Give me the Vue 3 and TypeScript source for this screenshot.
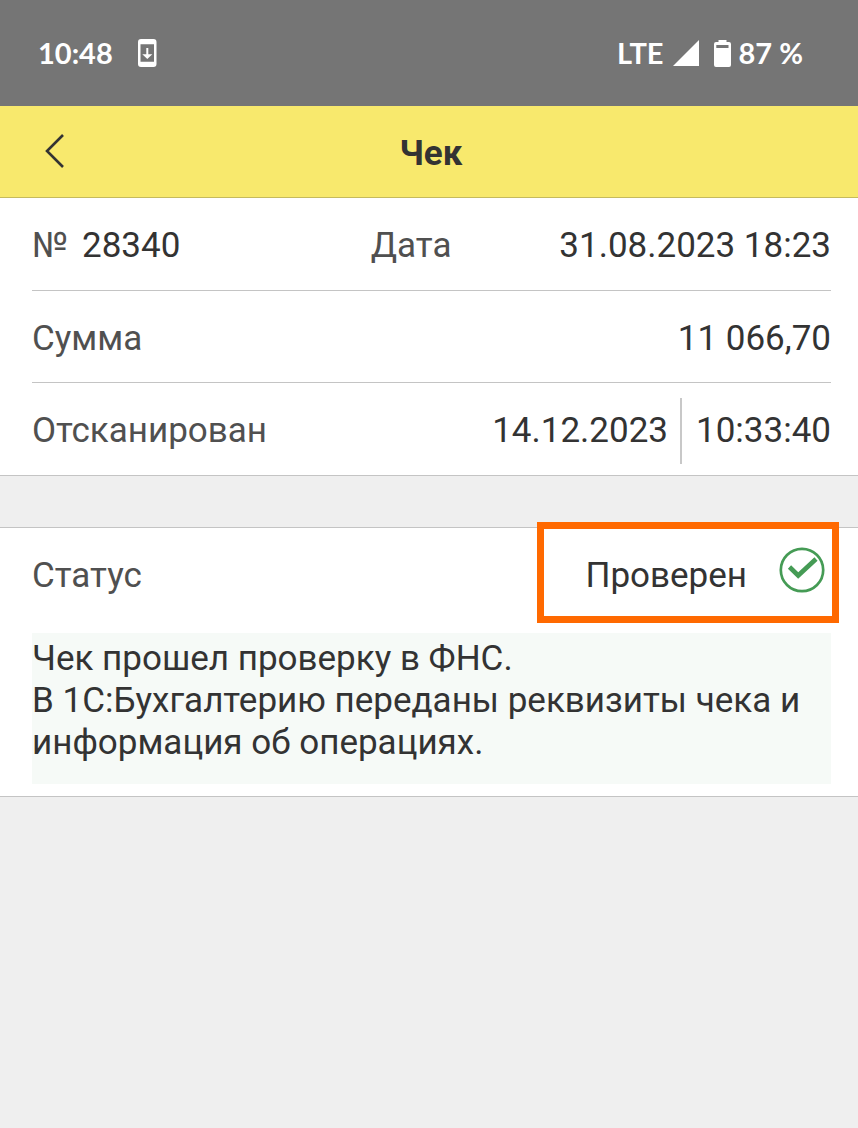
<script setup lang="ts">
interface Receipt {
  number: string
  date: string
  sum: string
  scannedDate: string
  scannedTime: string
  status: string
  details: string[]
}

const receipt: Receipt = {
  number: '28340',
  date: '31.08.2023 18:23',
  sum: '11 066,70',
  scannedDate: '14.12.2023',
  scannedTime: '10:33:40',
  status: 'Проверен',
  details: [
    'Чек прошел проверку в ФНС.',
    'В 1С:Бухгалтерию переданы реквизиты чека и информация об операциях.',
  ],
}
</script>

<template>
  <div class="screen">
    <div class="status-bar">
      <div class="group left">
        <span>10:48</span>
        <svg class="download" width="20" height="30" viewBox="0 0 20 30" aria-hidden="true">
          <path fill="#fff" fill-rule="evenodd" d="M3 1h12.500a3 3 0 0 1 3 3v22a3 3 0 0 1-3 3H3a3 3 0 0 1-3-3V4a3 3 0 0 1 3-3zM2.500 6.300v17.400H16V6.300z" />
          <path fill="#fff" d="M8.300 10h2v6.300h4l-5 4.700-5-4.700h4z" />
        </svg>
      </div>
      <div class="group right">
        <span>LTE</span>
        <svg class="signal" width="26" height="26" viewBox="0 0 26 26" aria-hidden="true">
          <path fill="#fff" d="M26 0v26H0z" />
        </svg>
        <svg class="battery" width="17" height="27" viewBox="0 0 17 27" aria-hidden="true">
          <path fill="#fff" fill-rule="evenodd" d="M4.500 0h8v2H15a2 2 0 0 1 2 2v21a2 2 0 0 1-2 2H2a2 2 0 0 1-2-2V4a2 2 0 0 1 2-2h2.500zM2.300 5v3h12.200V5z" />
        </svg>
        <span>87 %</span>
      </div>
    </div>

    <header class="title-bar">
      <button class="back" type="button" aria-label="Назад">
        <svg width="20" height="36" viewBox="0 0 20 36" aria-hidden="true">
          <path d="M18 2L2 18l16 16" fill="none" stroke="#333" stroke-width="2.600" />
        </svg>
      </button>
      <h1>Чек</h1>
    </header>

    <main>
      <section class="panel">
        <div class="row split">
          <div class="pair">
            <span class="label">№</span>
            <span>{{ receipt.number }}</span>
          </div>
          <div class="pair spread">
            <span class="label">Дата</span>
            <span>{{ receipt.date }}</span>
          </div>
        </div>
        <div class="row spread">
          <span class="label">Сумма</span>
          <span>{{ receipt.sum }}</span>
        </div>
        <div class="row spread">
          <span class="label">Отсканирован</span>
          <div class="stamp">
            <span>{{ receipt.scannedDate }}</span>
            <span class="time">{{ receipt.scannedTime }}</span>
          </div>
        </div>
      </section>

      <section class="panel status">
        <div class="row spread">
          <span class="label">Статус</span>
          <div class="state">
            <span>{{ receipt.status }}</span>
            <svg class="check" width="46" height="46" viewBox="0 0 46 46" aria-hidden="true">
              <g fill="none" stroke="#459b55">
                <circle cx="23" cy="23" r="21.200" stroke-width="2.700" />
                <path d="M10.500 20l8.700 8.500L37 12" stroke-width="4.600" />
              </g>
            </svg>
          </div>
          <div class="highlight" />
        </div>
        <div class="details">
          <p v-for="line in receipt.details" :key="line">{{ line }}</p>
        </div>
      </section>
    </main>
  </div>
</template>

<style>
body {
  background: #efefef;
}
</style>

<style scoped>
.screen {
  min-height: 100vh;
  background: #efefef;
  color: #333;
  font: 35px/42px Roboto, sans-serif;
}

.status-bar {
  display: flex;
  justify-content: space-between;
  align-items: center;
  box-sizing: border-box;
  height: 106px;
  padding: 0 55px 0 38px;
  background: #757575;
  color: #fff;
  font: 700 29px/36px Lato, sans-serif;
}

.group {
  display: flex;
  align-items: center;
}

.left {
  gap: 25px;
}

.signal {
  margin-left: 9px;
}

.battery {
  margin: 0 8px 0 15px;
}

.title-bar {
  position: relative;
  display: flex;
  justify-content: center;
  align-items: center;
  box-sizing: border-box;
  height: 92px;
  padding: 4px 0 0 4px;
  background: #f8e96d;
  border-bottom: 1px solid #c5ba5d;
}

.back {
  position: absolute;
  left: 31px;
  top: 15px;
  display: grid;
  place-items: center;
  width: 48px;
  height: 60px;
  padding: 0;
  border: 0;
  background: none;
}

h1 {
  margin: 0;
  font-size: 35px;
  font-weight: 700;
}

.panel {
  padding: 0 27px 0 32px;
  background: #fff;
  border-bottom: 1px solid #c4c4c4;
}

.row {
  display: flex;
  align-items: center;
  box-sizing: border-box;
  min-height: 92px;
  padding-top: 4px;
}

.row:last-child {
  min-height: 93px;
}

.row + .row {
  border-top: 1px solid #c4c4c4;
}

.spread {
  justify-content: space-between;
}

.split {
  display: grid;
  grid-template-columns: 42.4% 1fr;
}

.pair {
  display: flex;
  gap: 14px;
}

.label {
  color: #505050;
}

.stamp {
  display: flex;
  align-items: center;
  gap: 12px;
}

.time {
  padding: 12px 0 12px 14px;
  border-left: 2px solid #c8c8c8;
}

.status {
  margin-top: 51px;
  padding-bottom: 12px;
  border-top: 1px solid #c4c4c4;
}

.status .row {
  position: relative;
  min-height: 105px;
  padding: 0 6px 9px 0;
}

.state {
  display: flex;
  align-items: center;
  gap: 32px;
}

.check {
  margin-bottom: 13px;
}

.highlight {
  position: absolute;
  top: -6px;
  right: -8px;
  box-sizing: border-box;
  width: 302px;
  height: 101px;
  border: 7px solid #ff6900;
}

.details {
  padding: 5px 0 20px;
  background: #f6faf7;
}

p {
  margin: 0;
}
</style>
